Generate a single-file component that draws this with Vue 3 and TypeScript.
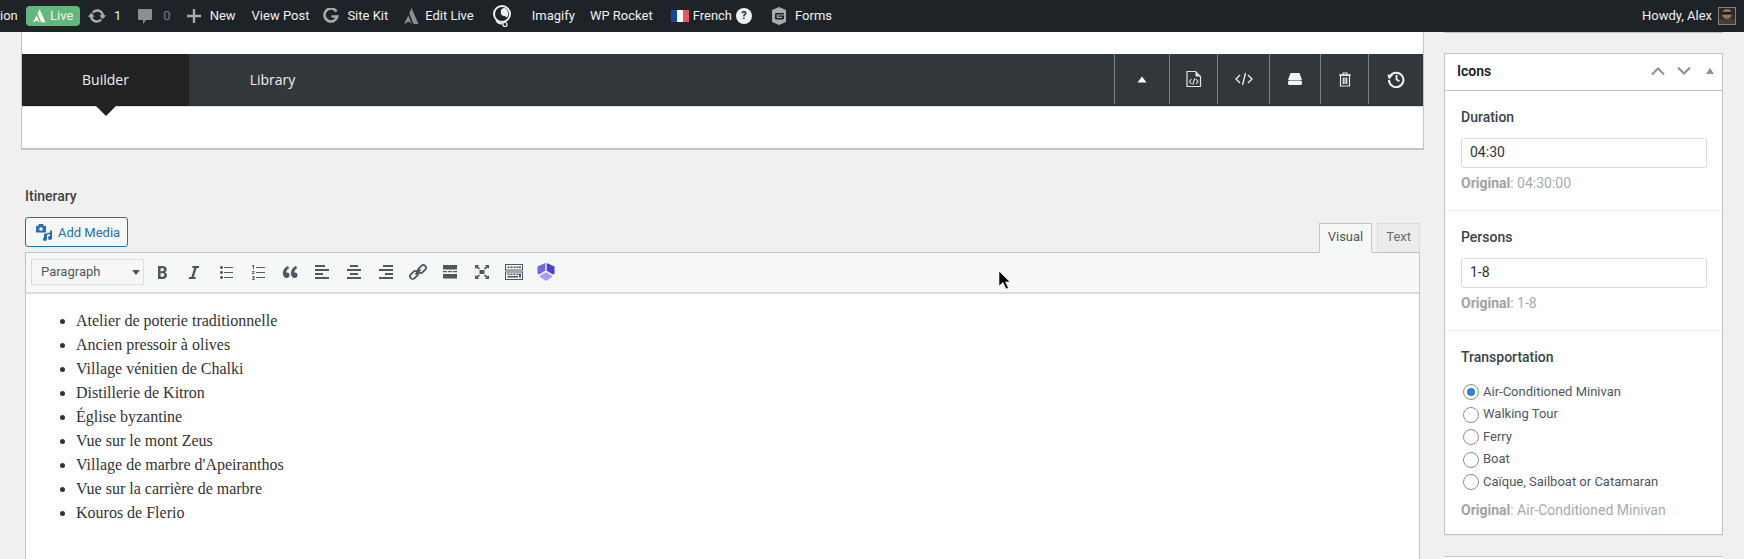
<script setup lang="ts">
const items: string[] = [
  'Atelier de poterie traditionnelle',
  'Ancien pressoir à olives',
  'Village vénitien de Chalki',
  'Distillerie de Kitron',
  'Église byzantine',
  'Vue sur le mont Zeus',
  "Village de marbre d'Apeiranthos",
  'Vue sur la carrière de marbre',
  'Kouros de Flerio',
]
const radios: string[] = [
  'Air-Conditioned Minivan',
  'Walking Tour',
  'Ferry',
  'Boat',
  'Caïque, Sailboat or Catamaran',
]
</script>

<template>
  <div class="page">
    <header class="adminbar">
      <span class="ab crop">ion</span>
      <span class="live">
        <svg class="live-logo" viewBox="0 0 16 16"><path d="M8.500 0L15.500 15 10.500 15 6.300 5.300zM5.300 7.500L8.800 15.500 5.800 13 1 15.500z" fill="#fff" /></svg>
        Live
      </span>
      <span class="ab updates">
        <svg width="20" height="20" viewBox="0 0 20 20"><path fill="#a7aaad" d="M10.200 3.280c3.530 0 6.430 2.610 6.920 6h2.080l-3.500 4-3.500-4h2.320a4.439 4.439 0 0 0-4.320-3.450c-1.450 0-2.730.71-3.540 1.780L4.950 5.660a7.007 7.007 0 0 1 5.250-2.380zm-.400 13.440c-3.520 0-6.430-2.610-6.920-6H.800l3.500-4c1.170 1.330 2.330 2.670 3.500 4H5.480a4.439 4.439 0 0 0 4.320 3.450c1.450 0 2.730-.71 3.540-1.780l1.710 1.950a7.007 7.007 0 0 1-5.250 2.380z" /></svg>
        <span>1</span>
      </span>
      <span class="ab comments">
        <svg width="16" height="18" viewBox="0 0 16 18"><path fill="#8c8f94" d="M2 2h12a1 1 0 0 1 1 1v9a1 1 0 0 1-1 1H9l-3 4v-4H2a1 1 0 0 1-1-1V3a1 1 0 0 1 1-1z" /></svg>
        <span class="dim">0</span>
      </span>
      <span class="ab new">
        <svg width="14" height="14" viewBox="0 0 14 14"><path fill="#a7aaad" d="M5.800 0h2.400v5.800H14v2.400H8.200V14H5.800V8.200H0V5.800h5.800z" /></svg>
        <span>New</span>
      </span>
      <span class="ab view">View Post</span>
      <span class="ab kit">
        <svg width="16" height="16" viewBox="0 0 16 16"><path fill="none" stroke="#a7aaad" stroke-width="2.600" d="M13.500 3.600A6.500 6.500 0 1 0 14.300 8.500H8.500" /></svg>
        <span>Site Kit</span>
      </span>
      <span class="ab edit">
        <svg width="16" height="16" viewBox="0 0 16 16"><path d="M8.500 0L15.500 16 10.500 16 6.300 5.300zM5.300 7.500L8.800 16 5.800 13.500 1 16z" fill="#8c8f94" /></svg>
        <span>Edit Live</span>
      </span>
      <span class="ab q">
        <svg width="20" height="24" viewBox="0 0 20 24"><circle cx="10" cy="10" r="8" fill="none" stroke="#f0f0f1" stroke-width="2" /><path d="M13 4a6.500 6.500 0 0 1 2 9.500L12.500 12a4 4 0 0 1 .5-8z" fill="#f0f0f1" /><path d="M4 16.500c2 3 4.500 3.500 6.500 3.200" fill="none" stroke="#f0f0f1" stroke-width="1.400" /><circle cx="13" cy="20.500" r="2" fill="none" stroke="#f0f0f1" stroke-width="1.200" /></svg>
      </span>
      <span class="ab imagify">Imagify</span>
      <span class="ab rocket">WP Rocket</span>
      <span class="ab french">
        <span class="flag"><i class="fb" /><i class="fw" /><i class="fr" /></span>
        <span>French</span>
        <span class="help">?</span>
      </span>
      <span class="ab forms">
        <svg width="16" height="18" viewBox="0 0 16 18"><path fill="#a7aaad" d="M8 0l7 3v12l-7 3-7-3V3z" /><path fill="#1d2327" d="M4 7.500A1.500 1.500 0 0 1 5.500 6H13v1.600H5.800v3.400H11V9.800H7V8.500h6V11a1.500 1.500 0 0 1-1.500 1.500h-6A1.500 1.500 0 0 1 4 11z" /></svg>
        <span>Forms</span>
      </span>
      <span class="ab howdy">
        Howdy, Alex
        <svg class="avatar" width="18" height="18" viewBox="0 0 18 18"><rect width="18" height="18" fill="#7e8478" /><rect x="1" y="1" width="16" height="16" fill="#2f2a26" /><ellipse cx="9" cy="7" rx="5" ry="5" fill="#8a7562" /><rect x="4" y="5" width="10" height="2.500" fill="#1d1a18" /><rect x="1" y="12" width="16" height="5" fill="#4a3a30" /></svg>
      </span>
    </header>

    <main class="main">
      <section class="left">
        <div class="card">
          <div class="bar">
            <div class="tab active">Builder</div>
            <div class="tab">Library</div>
            <div class="bar-actions">
              <span class="act w1">
                <svg width="10" height="7" viewBox="0 0 10 7"><path fill="#fff" d="M5 .500l4.500 6h-9z" /></svg>
              </span>
              <span class="act w2">
                <svg width="16" height="18" viewBox="0 0 16 18"><path fill="none" stroke="#e4e4e4" stroke-width="1.200" d="M1 1.500h8.500l5 5v10H1z" /><path fill="#e4e4e4" d="M9.500 1.500l5 5h-5z" /><path fill="none" stroke="#e4e4e4" stroke-width="1.100" d="M5.500 9L3.500 11.500l2 2.500M10 9l2 2.500-2 2.500M8.800 8.500L6.800 14.500" /></svg>
              </span>
              <span class="act w3">
                <svg width="18" height="14" viewBox="0 0 18 14"><path fill="none" stroke="#f0f0f0" stroke-width="1.300" d="M5 3L1 7l4 4M13 3l4 4-4 4M10.500 1L7.500 13" /></svg>
              </span>
              <span class="act w4">
                <svg width="16" height="14" viewBox="0 0 16 14"><path fill="#f4f4f4" d="M3.500 1h9L15 8H1z" /><rect x="1" y="8.500" width="14" height="4.500" rx="1.500" fill="#f4f4f4" /></svg>
              </span>
              <span class="act w5">
                <svg width="14" height="15" viewBox="0 0 14 15"><path fill="none" stroke="#e8e8e8" stroke-width="1.200" d="M2.500 3.500h9V14h-9zM1 2.800h12M5 2.800V1h4v1.800M5.300 5.500v6.500M7 5.500v6.500M8.700 5.500v6.500" /></svg>
              </span>
              <span class="act w6">
                <svg width="18" height="18" viewBox="0 0 18 18"><path fill="none" stroke="#f4f4f4" stroke-width="2" d="M3.500 5.500A7.200 7.200 0 1 1 2 10" /><path fill="#f4f4f4" d="M.300 4.800h6L2 9.500z" /><path fill="none" stroke="#f4f4f4" stroke-width="1.800" d="M9.500 5v4.500l3 1.800" /></svg>
              </span>
            </div>
          </div>
        </div>

        <h3 class="field-title">Itinerary</h3>

        <div class="editor">
          <div class="editor-head">
            <button class="media">
              <svg width="18" height="18" viewBox="0 0 18 18"><path fill="#2271b1" d="M1 3h2l1-2h4l1 2h2v6.500H1z" /><circle cx="6" cy="6" r="1.800" fill="#f6f7f7" /><path fill="#2271b1" d="M9 11l6-1.500v-2h2v7.500a2 2 0 1 1-2-2V11l-3 .8V16a2 2 0 1 1-3-1.700z" /></svg>
              Add Media
            </button>
            <div class="modes">
              <span class="mode on">Visual</span>
              <span class="mode">Text</span>
            </div>
          </div>
          <div class="box">
            <div class="toolbar">
              <div class="format">Paragraph<i class="caret" /></div>
              <div class="tools">
                <span class="tool"><svg viewBox="0 0 20 20"><path d="M6 4v13h4.540c1.370 0 2.460-.33 3.260-1 .8-.66 1.200-1.580 1.200-2.770 0-.84-.17-1.510-.51-2.010s-.9-.85-1.670-1.030v-.09c.57-.1 1.020-.4 1.360-.9s.51-1.130.51-1.910c0-1.140-.39-1.980-1.170-2.500C12.750 4.260 11.500 4 9.780 4H6zm2.570 5.150V6.260h1.360c.73 0 1.270.11 1.610.32.34.22.51.58.51 1.070 0 .54-.16.92-.47 1.150s-.82.35-1.510.35h-1.500zm0 2.190h1.600c1.440 0 2.160.53 2.160 1.610 0 .6-.17 1.050-.51 1.340s-.86.45-1.570.45H8.570v-3.400z" /></svg></span>
                <span class="tool"><svg viewBox="0 0 20 20"><path d="M14.780 6h-2.130l-2.800 9h2.120l-.62 2H4.600l.62-2h2.140l2.800-9H8.030l.62-2h6.750z" /></svg></span>
                <span class="tool"><svg viewBox="0 0 20 20"><path d="M5.500 7C4.670 7 4 6.330 4 5.500 4 4.680 4.670 4 5.500 4 6.320 4 7 4.680 7 5.500 7 6.330 6.320 7 5.500 7zM8 5h9v1H8V5zm-2.500 7c-.83 0-1.500-.67-1.500-1.500C4 9.680 4.670 9 5.500 9c.82 0 1.500.68 1.500 1.500 0 .83-.68 1.500-1.500 1.500zM8 10h9v1H8v-1zm-2.500 7c-.83 0-1.500-.67-1.500-1.500 0-.82.67-1.500 1.500-1.500.82 0 1.500.68 1.500 1.500 0 .83-.68 1.500-1.500 1.500zM8 15h9v1H8v-1z" /></svg></span>
                <span class="tool"><svg viewBox="0 0 20 20"><path d="M8 5h9v1H8zM8 10h9v1H8zM8 15h9v1H8zM5 3h1v4H5V4.200l-1 .6V4zM4 9h2.500v.8L5 11.200h1.500v.8H4v-.7l1.500-1.500H4zM4 14h2.500v4H4v-.8h1.500v-.8H4.500v-.7h1v-.9H4z" /></svg></span>
                <span class="tool"><svg viewBox="0 0 20 20"><path d="M9.490 13.220c0-.74-.2-1.380-.61-1.900-.62-.78-1.830-.88-2.530-.72-.29-1.650 1.110-3.750 2.920-4.650L7.880 4c-2.730 1.300-5.420 4.280-4.960 8.050C3.210 14.430 4.590 16 6.540 16c.85 0 1.560-.25 2.120-.75s.83-1.180.83-2.030zm8.050 0c0-.74-.2-1.380-.61-1.900-.63-.78-1.830-.88-2.530-.72-.29-1.650 1.110-3.750 2.920-4.650L15.940 4c-2.730 1.300-5.420 4.280-4.960 8.050.29 2.380 1.670 3.950 3.620 3.950.85 0 1.560-.25 2.120-.75s.82-1.180.82-2.030z" /></svg></span>
                <span class="tool"><svg viewBox="0 0 20 20"><path d="M3 3h10v2H3zM3 7h14v2H3zM3 11h8v2H3zM3 15h14v2H3z" /></svg></span>
                <span class="tool"><svg viewBox="0 0 20 20"><path d="M6 3h8v2H6zM3 7h14v2H3zM6 11h8v2H6zM3 15h14v2H3z" /></svg></span>
                <span class="tool"><svg viewBox="0 0 20 20"><path d="M7 3h10v2H7zM3 7h14v2H3zM9 11h8v2H9zM3 15h14v2H3z" /></svg></span>
                <span class="tool"><svg viewBox="0 0 20 20"><g fill="none" stroke="#50575e" stroke-width="1.800"><rect x="1.500" y="10.300" width="9" height="5.400" rx="2.700" transform="rotate(-45 6 13)" /><rect x="9.500" y="4.300" width="9" height="5.400" rx="2.700" transform="rotate(-45 14 7)" /><path d="M7.500 12.500l5-5" /></g></svg></span>
                <span class="tool"><svg viewBox="0 0 20 20"><path d="M3 3h14v4.500H3zM3 9h4v1.300H3zM8 9h4v1.300H8zM13 9h4v1.300h-4zM3 12h14v4.500H3z" /></svg></span>
                <span class="tool"><svg viewBox="0 0 20 20"><path d="M7.500 8h5v4h-5zM3 3h4L5.800 4.200 8 6.500 6.800 7.600 4.200 5.600 3 7zM17 3v4l-1.200-1.400L13.200 7.600 12 6.500l2.200-2.300L13 3zM3 17v-4l1.200 1.400L6.800 12.400 8 13.500l-2.200 2.300L7 17zM17 17h-4l1.200-1.200L12 13.500l1.200-1.100 2.600 2L17 13z" /></svg></span>
                <span class="tool"><svg viewBox="0 0 20 20"><g fill="none" stroke="#50575e" stroke-width="1"><rect x="1.500" y="2.500" width="17" height="5.500" /><rect x="1.500" y="10" width="17" height="7.500" /></g><path d="M3.500 4.500h2v1.500h-2zM6.500 4.500h2v1.500h-2zM9.500 4.500h2v1.500h-2zM12.500 4.500h2v1.500h-2zM15 4.500h2v1.500h-2zM3.500 11.500h2v1.500h-2zM6.500 11.500h2v1.500h-2zM9.500 11.500h2v1.500h-2zM12.500 11.500h2v1.500h-2zM15 11.500h2v4h-2zM3.500 14h10.500v1.500H3.500z" /></svg></span>
                <span class="tool"><svg viewBox="0 0 20 20"><path fill="#7566e3" d="M9.300 1v7.800L3 12.500l-1.500-1V4.500z" /><path fill="#4f3fd6" d="M10.700 1v7.800l6.300 3.700 1.500-1V4.500z" /><path fill="#a79ff3" d="M10 10.300l6 3.500v1.200L10 19l-6-4v-1.200z" /></svg></span>
              </div>
            </div>
            <div class="content">
              <ul>
                <li v-for="it in items" :key="it">{{ it }}</li>
              </ul>
            </div>
          </div>
        </div>
      </section>

      <aside class="side">
        <div class="stub" />
        <div class="panel">
          <div class="panel-head">
            <h2>Icons</h2>
            <svg class="ctl" width="16" height="10" viewBox="0 0 16 10"><path fill="none" stroke="#8c8f94" stroke-width="2" d="M2 8.500L8 2.500l6 6" /></svg>
            <svg class="ctl" width="16" height="10" viewBox="0 0 16 10"><path fill="none" stroke="#8c8f94" stroke-width="2" d="M2 1.500l6 6 6-6" /></svg>
            <svg class="ctl tri" width="10" height="8" viewBox="0 0 10 8"><path fill="#8c8f94" d="M5 1l4 6H1z" /></svg>
          </div>
          <div class="group">
            <label class="lbl">Duration</label>
            <div class="input">04:30</div>
            <p class="orig"><b>Original</b>: 04:30:00</p>
          </div>
          <div class="group">
            <label class="lbl">Persons</label>
            <div class="input">1-8</div>
            <p class="orig"><b>Original</b>: 1-8</p>
          </div>
          <div class="group last">
            <label class="lbl">Transportation</label>
            <div class="radios">
              <div v-for="(r, i) in radios" :key="r" class="radio">
                <i class="dot" :class="{ checked: i === 0 }" />
                <span>{{ r }}</span>
              </div>
            </div>
            <p class="orig final"><b>Original</b>: Air-Conditioned Minivan</p>
          </div>
        </div>
        <div class="next" />
      </aside>
    </main>

    <svg class="cursor" width="14" height="22" viewBox="0 0 14 22"><path d="M1 1v15l4-3.500L8 19l2.500-1-3-6H12z" fill="#000" stroke="#fff" stroke-width=".6" /></svg>
  </div>
</template>

<style>
html, body { margin: 0; background: #f0f0f0; overflow: hidden; }
</style>

<style scoped>
.page {
  position: relative;
  width: 1744px;
  height: 559px;
  overflow: hidden;
  background: #f0f0f0;
  font-family: Roboto, "Liberation Sans", sans-serif;
  color: #3c434a;
}
.adminbar {
  display: flex;
  align-items: center;
  height: 32px;
  box-sizing: border-box;
  padding-bottom: 1px;
  background: #1d2327;
  color: #f0f0f1;
  font-size: 13px;
  white-space: nowrap;
}
.ab { display: inline-flex; align-items: center; }
.crop { width: 26px; }
.live {
  display: inline-flex;
  align-items: center;
  gap: 4px;
  width: 54px;
  height: 20px;
  box-sizing: border-box;
  padding-left: 6px;
  background: #62b87b;
  border-radius: 4px;
  color: #f0f0f1;
  font-size: 13px;
}
.live-logo { width: 14px; height: 14px; }
.updates { margin-left: 7px; gap: 7px; }
.comments { margin-left: 16px; gap: 10px; }
.dim { color: #787c82; }
.new { margin-left: 16px; gap: 9px; }
.view { margin-left: 16px; }
.kit { margin-left: 14px; gap: 8px; }
.edit { margin-left: 15px; gap: 6px; }
.q { margin-left: 18px; }
.imagify { margin-left: 20px; }
.rocket { margin-left: 15px; }
.french { margin-left: 18px; gap: 4px; }
.flag { display: flex; width: 18px; height: 12px; }
.flag i { flex: 1; }
.fb { background: #0f44a8; }
.fw { background: #fff; }
.fr { background: #f4515c; }
.help {
  width: 16px;
  height: 16px;
  border-radius: 50%;
  background: #f0f0f1;
  color: #1d2327;
  font-size: 11px;
  font-weight: 700;
  text-align: center;
  line-height: 16px;
}
.forms { margin-left: 19px; gap: 8px; }
.howdy { margin-left: auto; margin-right: 8px; gap: 6px; }
.avatar { display: block; }

.main { display: flex; align-items: flex-start; padding-left: 21px; }
.left { width: 1403px; flex: none; }
.card {
  height: 118px;
  box-sizing: border-box;
  padding-top: 22px;
  background: #fff;
  border: 1px solid #c3c4c7;
  border-top: 0;
  border-bottom-width: 2px;
}
.bar {
  display: flex;
  height: 53px;
  background: #32373c;
  border-bottom: 1px solid #dcdcde;
  box-sizing: border-box;
  color: #f0f0f1;
  font-family: "Open Sans", sans-serif;
  font-size: 14px;
}
.tab {
  position: relative;
  width: 167px;
  line-height: 51px;
  text-align: center;
  margin-right: 0;
}
.tab.active { background: #222; }
.tab.active::after {
  content: "";
  position: absolute;
  left: 74px;
  top: 52px;
  border: 10px solid transparent;
  border-bottom: 0;
  border-top-color: #222;
}
.tab + .tab { width: 167px; }
.bar-actions { display: flex; margin-left: auto; }
.act {
  display: flex;
  align-items: center;
  justify-content: center;
  height: 50px;
  box-sizing: border-box;
  border-left: 1px solid #7c8084;
}
.w1 { width: 55px; }
.w2 { width: 48px; }
.w3 { width: 52px; }
.w4 { width: 51px; }
.w5 { width: 48px; }
.w6 { width: 55px; }

.field-title {
  margin: 36px 0 0 4px;
  height: 20px;
  font-size: 14px;
  line-height: 20px;
  font-weight: 500;
  color: #3c434a;
}
.editor { margin: 11px 4px 0 4px; }
.editor-head { display: flex; justify-content: space-between; align-items: flex-end; }
.media {
  display: inline-flex;
  align-items: center;
  gap: 5px;
  width: 103px;
  height: 30px;
  padding: 0 0 0 9px;
  margin-bottom: 5px;
  box-sizing: border-box;
  background: #f6f7f7;
  border: 1px solid #2271b1;
  border-radius: 3px;
  color: #2271b1;
  font-family: inherit;
  font-size: 13px;
}
.modes { display: flex; gap: 5px; }
.mode {
  height: 30px;
  box-sizing: border-box;
  padding: 0 8px;
  margin-bottom: -1px;
  background: #ececec;
  border: 1px solid #dcdcde;
  border-bottom: 1px solid #c3c4c7;
  font-size: 13px;
  line-height: 26px;
  color: #646970;
  position: relative;
  z-index: 1;
}
.mode.on {
  background: #f6f7f7;
  border-color: #c3c4c7;
  border-bottom-color: #f6f7f7;
  padding: 0 8px;
  color: #50575e;
}
.box { border: 1px solid #c3c4c7; height: 330px; background: #fff; }
.toolbar {
  display: flex;
  align-items: center;
  height: 41px;
  box-sizing: border-box;
  padding: 0 0 1px 5px;
  background: #f6f7f7;
  border-bottom: 2px solid #dcdcde;
}
.format {
  position: relative;
  width: 113px;
  height: 26px;
  box-sizing: border-box;
  padding-left: 9px;
  background: #f6f7f7;
  border: 1px solid #dcdcde;
  font-size: 13px;
  line-height: 23px;
  color: #50575e;
}
.caret {
  position: absolute;
  right: 3px;
  top: 10px;
  border: 4px solid transparent;
  border-top: 5px solid #50575e;
  border-bottom: 0;
}
.tools { display: flex; margin-left: 2px; }
.tool {
  display: flex;
  align-items: center;
  justify-content: center;
  width: 32px;
  height: 28px;
}
.tool svg { width: 20px; height: 20px; fill: #50575e; }
.content { padding: 1px 0 0; }
.content ul {
  margin: 14px 0 0;
  padding-left: 50px;
  font-family: "Liberation Serif", serif;
  font-size: 16px;
  line-height: 24px;
  color: #333;
}

.side { width: 279px; flex: none; margin-left: 20px; }
.stub { height: 1px; background: #c3c4c7; margin-bottom: 20px; }
.panel {
  background: #fff;
  border: 1px solid #c3c4c7;
  box-shadow: 0 1px 1px rgba(0, 0, 0, 0.04);
}
.panel-head {
  display: flex;
  align-items: center;
  gap: 10px;
  padding: 0 7px 2px 12px;
  box-sizing: border-box;
  border-bottom: 1px solid #c3c4c7;
  height: 37px;
}
.panel-head h2 {
  margin: 0 auto 0 0;
  font-size: 14px;
  font-weight: 600;
  color: #1d2327;
}
.tri { margin-left: 3px; }
.group {
  padding: 16px 16px 0;
  height: 120px;
  box-sizing: border-box;
  border-bottom: 1px solid #f0f0f1;
}
.group:first-of-type { height: 119px; }
.group.last { height: auto; border-bottom: 0; padding-bottom: 13px; }
.lbl {
  display: block;
  height: 20px;
  font-size: 14px;
  line-height: 20px;
  font-weight: 500;
  color: #3c434a;
}
.input {
  width: 246px;
  height: 30px;
  margin-top: 11px;
  box-sizing: border-box;
  padding-left: 8px;
  background: #fff;
  border: 1px solid #dcdcde;
  border-radius: 2px;
  font-size: 14px;
  line-height: 26px;
  color: #2c3338;
}
.orig {
  margin: 4px 0 0;
  font-size: 14px;
  line-height: 22px;
  color: #a7aaad;
}
.orig b { color: #a0a3a6; }
.radios { margin-top: 13px; }
.radio {
  display: flex;
  align-items: center;
  gap: 4px;
  height: 22.5px;
  padding-left: 2px;
  font-size: 13px;
  color: #50575e;
}
.dot {
  position: relative;
  top: 1px;
  width: 16px;
  height: 16px;
  box-sizing: border-box;
  border: 1px solid #8c8f94;
  border-radius: 50%;
  background: #fff;
}
.dot.checked::after {
  content: "";
  position: absolute;
  left: 3px;
  top: 3px;
  width: 8px;
  height: 8px;
  border-radius: 50%;
  background: #2f80d0;
}
.final { margin-top: 6px; }
.next { height: 20px; margin-top: 21px; border-top: 1px solid #c3c4c7; background: #fff; }
.cursor { position: absolute; left: 998px; top: 270px; }
</style>
